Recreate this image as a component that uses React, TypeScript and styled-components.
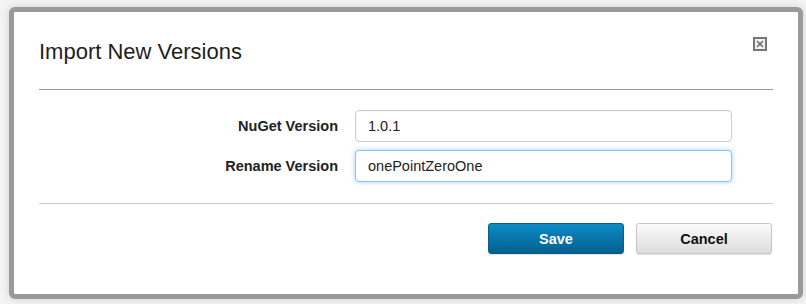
import React from "react";
import styled, { createGlobalStyle } from "styled-components";

const GlobalStyle = createGlobalStyle`
  html, body {
    margin: 0;
    padding: 0;
    background: #f4f4f4;
    font-family: "Liberation Sans", Arial, sans-serif;
  }
  * {
    box-sizing: border-box;
  }
`;

const Page = styled.div`
  width: 806px;
  height: 304px;
  padding: 7px 3px 0 9px;
  overflow: hidden;
`;

const Dialog = styled.div`
  width: 794px;
  background: #fff;
  border: 5px solid #9a9a9a;
  border-radius: 6px;
  box-shadow: 0 0 8px rgba(0, 0, 0, 0.15);
  padding: 0 25px;
`;

const Header = styled.div`
  display: flex;
  justify-content: space-between;
  align-items: flex-start;
  padding: 27px 0 24px;
`;

const Title = styled.h2`
  margin: 0;
  font-size: 22px;
  line-height: 26px;
  font-weight: normal;
  color: #1e1e1e;
`;

const CloseButton = styled.button`
  border: 0;
  background: none;
  padding: 0;
  margin: -2px 6px 0 0;
  width: 14px;
  height: 14px;
  cursor: pointer;
  display: flex;
`;

const Divider = styled.hr<{ $tone: string }>`
  border: 0;
  margin: 0;
  height: 1px;
  background: ${(p) => p.$tone};
`;

const Form = styled.div`
  display: grid;
  grid-template-columns: 1fr 377px;
  column-gap: 17px;
  row-gap: 8px;
  align-items: center;
  padding: 20px 41px 21px 0;
`;

const Label = styled.label`
  text-align: right;
  font-size: 14.5px;
  font-weight: bold;
  color: #222;
`;

const Input = styled.input<{ $focused?: boolean }>`
  height: 32px;
  width: 100%;
  padding: 0 12px;
  font-family: "Liberation Sans", Arial, sans-serif;
  font-size: 14.5px;
  color: #222;
  background: #fff;
  border: 1px solid ${(p) => (p.$focused ? "#86c5ee" : "#cccccc")};
  border-radius: 4px;
  outline: none;
  box-shadow: ${(p) =>
    p.$focused ? "0 0 5px rgba(82, 168, 236, 0.55)" : "inset 0 1px 1px rgba(0,0,0,0.04)"};
`;

const Footer = styled.div`
  display: flex;
  justify-content: flex-end;
  gap: 12px;
  padding: 19px 1px 40px 0;
`;

const Button = styled.button<{ $primary?: boolean }>`
  width: 136px;
  height: 31px;
  border-radius: 3px;
  font-family: "Liberation Sans", Arial, sans-serif;
  font-size: 14.5px;
  font-weight: bold;
  cursor: pointer;
  color: ${(p) => (p.$primary ? "#fff" : "#111")};
  border: 1px solid ${(p) => (p.$primary ? "#0a5d89" : "#c6c6c6")};
  background: ${(p) =>
    p.$primary
      ? "linear-gradient(to bottom, #0b8cc7 0%, #05608f 100%)"
      : "linear-gradient(to bottom, #fbfbfb 0%, #dcdcdc 100%)"};
  box-shadow: 0 1px 1px rgba(0, 0, 0, 0.12);
`;

function CloseIcon() {
  return (
    <svg width="14" height="14" viewBox="0 0 14 14">
      <rect x="1" y="1" width="12" height="12" fill="#f2f2f2" stroke="#767676" strokeWidth="2" />
      <path d="M4 4 L10 10 M10 4 L4 10" stroke="#6e6e6e" strokeWidth="1.6" />
    </svg>
  );
}

export default function App() {
  return (
    <Page>
      <GlobalStyle />
      <Dialog>
        <Header>
          <Title>Import New Versions</Title>
          <CloseButton aria-label="Close">
            <CloseIcon />
          </CloseButton>
        </Header>
        <Divider $tone="#9a9a9a" />
        <Form>
          <Label htmlFor="nuget">NuGet Version</Label>
          <Input id="nuget" defaultValue="1.0.1" />
          <Label htmlFor="rename">Rename Version</Label>
          <Input id="rename" defaultValue="onePointZeroOne" $focused />
        </Form>
        <Divider $tone="#cfcfcf" />
        <Footer>
          <Button $primary>Save</Button>
          <Button>Cancel</Button>
        </Footer>
      </Dialog>
    </Page>
  );
}
